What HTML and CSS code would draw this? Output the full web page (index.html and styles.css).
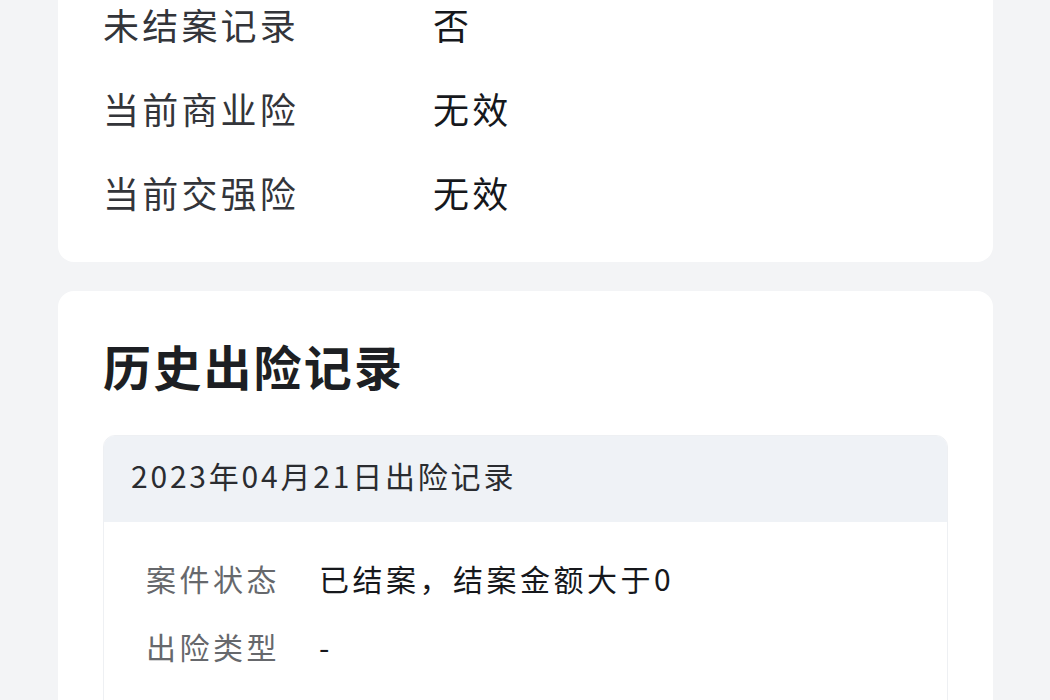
FILE: index.html
```html
<!DOCTYPE html>
<html lang="zh-CN">
<head>
  <meta charset="UTF-8" />
  <meta name="viewport" content="width=device-width, initial-scale=1.0"/>
  <title>车辆出险记录</title>
  <link rel="stylesheet" href="styles.css">
</head>
<body>
  <div class="page">
    <section class="card card-summary">
      <div class="info-row">
        <span class="info-label">未结案记录</span>
        <span class="info-value">否</span>
      </div>
      <div class="info-row">
        <span class="info-label">当前商业险</span>
        <span class="info-value">无效</span>
      </div>
      <div class="info-row">
        <span class="info-label">当前交强险</span>
        <span class="info-value">无效</span>
      </div>
    </section>

    <section class="card card-history">
      <h2 class="card-title">历史出险记录</h2>
      <div class="record">
        <div class="record-head">2023年04月21日出险记录</div>
        <div class="record-body">
          <div class="record-row">
            <span class="record-label">案件状态</span>
            <span class="record-value">已结案，结案金额大于0</span>
          </div>
          <div class="record-row">
            <span class="record-label">出险类型</span>
            <span class="record-value">-</span>
          </div>
          <div class="record-row">
            <span class="record-label">出险金额</span>
            <span class="record-value">-</span>
          </div>
        </div>
      </div>
    </section>
  </div>
</body>
</html>
```

FILE: styles.css
```css
body {
  margin: 0;
  font-family: "Noto Sans CJK SC", "Noto Sans", sans-serif;
  background: #f3f4f6;
  color: #1d1f23;
  overflow: hidden;
}

.page {
  padding: 0 57px 0 58px;
  display: flex;
  flex-direction: column;
  gap: 29px;
}

.card {
  background: #ffffff;
  border-radius: 16px;
}

.card-summary {
  margin-top: -44px;
  padding: 26px 45px 28px;
}

.info-row {
  display: flex;
  height: 84px;
  align-items: center;
  font-size: 36px;
  letter-spacing: 3.2px;
}

.info-label {
  width: 330px;
  color: #33353a;
}

.info-value {
  color: #16181c;
}

.card-history {
  padding: 44px 45px 40px;
}

.card-title {
  margin: 0 0 40px;
  font-size: 48px;
  line-height: 60px;
  font-weight: 600;
  letter-spacing: 2.2px;
  color: #1d1f23;
}

.record {
  border: 1px solid #eef0f3;
  border-radius: 12px;
  overflow: hidden;
}

.record-head {
  background: #eff2f6;
  line-height: 79px;
  padding: 0 0 7px 27px;
  font-size: 30px;
  letter-spacing: 2.8px;
  color: #2a2c30;
}

.record-body {
  padding: 22px 42px 20px;
}

.record-row {
  display: flex;
  height: 68px;
  align-items: center;
  font-size: 30px;
  letter-spacing: 3.5px;
}

.record-label {
  width: 173px;
  color: #66686c;
}

.record-value {
  color: #16181c;
}
```
